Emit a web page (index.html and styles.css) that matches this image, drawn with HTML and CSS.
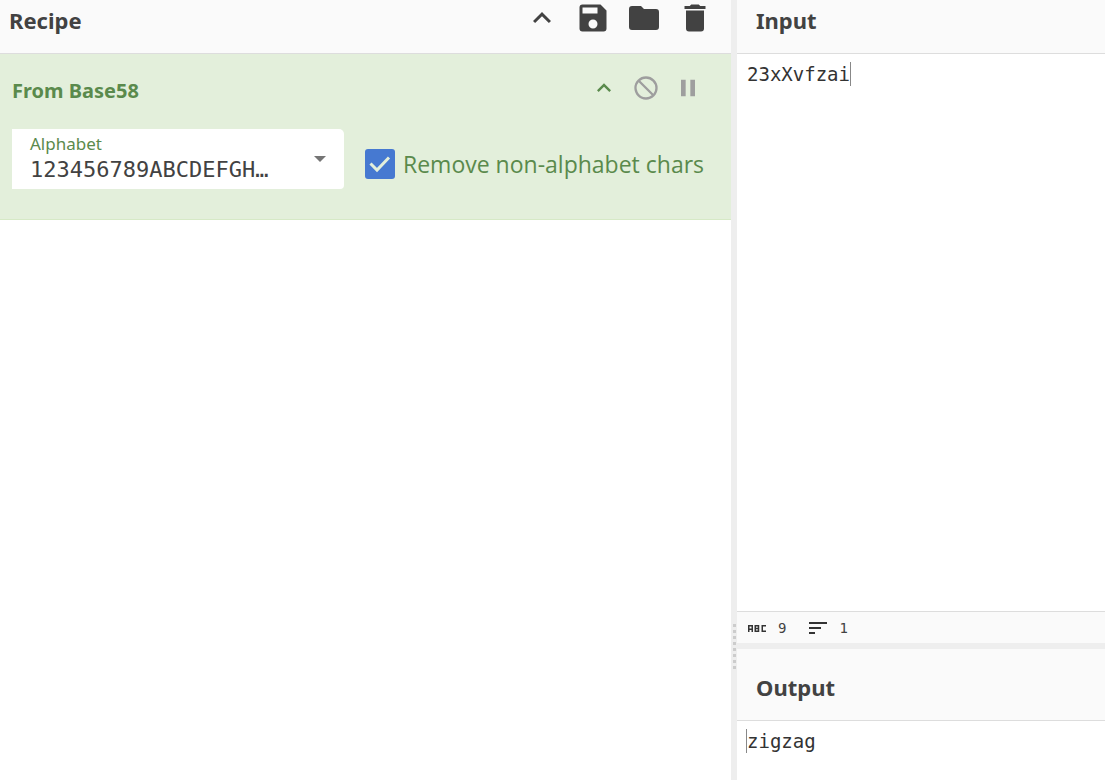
FILE: index.html
```html
<!DOCTYPE html>
<html lang="en">
<head>
<meta charset="utf-8">
<title>Recipe</title>
<link rel="stylesheet" href="styles.css">
</head>
<body>
<main class="workspace">
  <section class="recipe">
    <header class="title recipe-title">
      <h1>Recipe</h1>
      <div class="controls">
        <button type="button" aria-label="Hide arguments"><svg width="36" height="36" viewBox="0 0 24 24"><path d="M12 8l-6 6 1.41 1.41L12 10.83l4.59 4.58L18 14z"/></svg></button>
        <button type="button" aria-label="Save recipe"><svg width="36" height="36" viewBox="0 0 24 24"><path d="M17 3H5a2 2 0 0 0-2 2v14a2 2 0 0 0 2 2h14a2 2 0 0 0 2-2V7l-4-4zm-5 16a3 3 0 1 1 0-6 3 3 0 0 1 0 6zm3-10H5V5h10v4z"/></svg></button>
        <button type="button" aria-label="Load recipe"><svg width="36" height="36" viewBox="0 0 24 24"><path d="M10 4H4a2 2 0 0 0-2 2v12a2 2 0 0 0 2 2h16a2 2 0 0 0 2-2V8a2 2 0 0 0-2-2h-8l-2-2z"/></svg></button>
        <button type="button" aria-label="Clear recipe"><svg width="36" height="36" viewBox="0 0 24 24"><path d="M6 19a2 2 0 0 0 2 2h8a2 2 0 0 0 2-2V7H6v12zM19 4h-3.500l-1-1h-5l-1 1H5v2h14V4z"/></svg></button>
      </div>
    </header>
    <article class="operation">
      <div class="operation-head">
        <h2>From Base58</h2>
        <div class="op-controls">
          <button type="button" class="fold" aria-label="Hide operation arguments"><svg width="28" height="28" viewBox="0 0 24 24"><path d="M12 8l-6 6 1.410 1.410L12 10.830l4.590 4.580L18 14z"/></svg></button>
          <button type="button" aria-label="Disable operation"><svg width="28" height="28" viewBox="0 0 24 24"><path d="M12 2a10 10 0 1 0 0 20 10 10 0 0 0 0-20zM20 12a8 8 0 0 0-8-8c-1.850 0-3.550.630-4.900 1.690L18.310 16.900A7.900 7.900 0 0 0 20 12zm-8 8a7.900 7.900 0 0 0 4.900-1.690L5.690 7.100A8 8 0 0 0 12 20z" fill-rule="evenodd"/></svg></button>
          <button type="button" aria-label="Set breakpoint"><svg width="28" height="28" viewBox="0 0 24 24"><path d="M6 19h4V5H6v14zm8-14v14h4V5h-4z"/></svg></button>
        </div>
      </div>
      <div class="arguments">
        <div class="select-field">
          <div class="select-text">
            <label for="alphabet">Alphabet</label>
            <select id="alphabet"><option>123456789ABCDEFGH…</option></select>
          </div>
          <svg class="arrow" width="12" height="6" viewBox="0 0 12 6"><path d="M0 0h12L6 6z"/></svg>
        </div>
        <label class="check"><input type="checkbox" checked><span class="box"><svg width="30" height="30" viewBox="0 0 30 30"><path d="M5.500 14.500l6.500 6.500L24 8.500"/></svg></span><span>Remove non-alphabet chars</span></label>
      </div>
    </article>
  </section>
  <div class="splitter"><span class="grip"></span></div>
  <div class="io">
    <section class="pane">
      <header class="title"><h1>Input</h1></header>
      <div class="editor">
        <textarea aria-label="Input" spellcheck="false">23xXvfzai</textarea>
        <span class="caret caret-end"></span>
      </div>
      <footer class="status">
        <span class="stat"><svg width="20" height="20" viewBox="0 0 20 20"><path d="M1.750 14V7.750h3.500V14M1.750 11.250h3.500M8.250 7.750h3.250v5.500H8.250zM8.250 10.500h3.250M19 7.750h-3.750v5.500H19"/></svg>9</span>
        <span class="stat lines"><svg width="20" height="20" viewBox="0 0 20 20"><path d="M1 5h18M1 10h12M1 15h6"/></svg>1</span>
      </footer>
    </section>
    <div class="row-splitter"></div>
    <section class="pane">
      <header class="title output-title"><h1>Output</h1></header>
      <div class="editor">
        <textarea aria-label="Output" spellcheck="false" readonly>zigzag</textarea>
        <span class="caret caret-start"></span>
      </div>
    </section>
  </div>
</main>
</body>
</html>
```

FILE: styles.css
```css
* { box-sizing: border-box; }
body {
  margin: 0;
  font-family: "Noto Sans", "Open Sans", sans-serif;
  color: #424242;
  background: #fff;
}
button {
  display: flex;
  padding: 0;
  border: 0;
  background: none;
  color: inherit;
}
svg { display: block; fill: currentColor; }
h1, h2 { margin: 0; line-height: 30px; }
h1 { font-size: 22px; }
h2 { font-size: 20px; }

.workspace {
  display: grid;
  grid-template-columns: 731fr 6px 368fr;
  height: 100vh;
}
.recipe { min-width: 0; }
.title {
  display: flex;
  justify-content: space-between;
  height: 54px;
  padding: 5px 19px 0;
  background: #fafafa;
  border-bottom: 1px solid #ddd;
}
.recipe-title { padding: 0 18px 0 9px; }
.recipe-title h1 { padding-top: 5px; }
.controls { display: flex; gap: 15px; }

.operation {
  height: 166px;
  padding: 20px 29px 30px 12px;
  color: #5a8a4c;
  background: #e3efdb;
  border-bottom: 1px solid #d6e9c6;
}
.operation-head { display: flex; justify-content: space-between; height: 55px; }
.operation-head h2 { padding-top: 2px; }
.op-controls { display: flex; gap: 14px; color: #9e9e9e; }
.fold { color: #5a8a4c; }
.arguments { display: flex; gap: 21px; }
.select-field {
  display: flex;
  flex: none;
  align-items: center;
  width: 332px;
  height: 60px;
  padding: 0 18px;
  background: #fff;
  border-radius: 0 5px 4px 0;
}
.select-text { flex: 1; min-width: 0; }
.select-text label { display: block; font-size: 17px; line-height: 22px; }
select {
  display: block;
  width: 100%;
  height: 30px;
  padding: 0;
  border: 0;
  appearance: none;
  background: none;
  color: #424242;
  font: 22px/30px "DejaVu Sans Mono", monospace;
}
.arrow { color: #757575; }
.check {
  position: relative;
  display: flex;
  align-items: center;
  gap: 8px;
  height: 70px;
  font-family: "Open Sans", sans-serif;
  font-size: 23px;
  line-height: 32px;
  white-space: nowrap;
}
.check input { position: absolute; opacity: 0; }
.box { width: 30px; height: 30px; background: #4679d1; border-radius: 3px; }
.box svg { fill: none; stroke: #e3efdb; stroke-width: 3; }

.splitter { position: relative; background: #eee; }
.grip {
  position: absolute;
  top: 80%;
  right: 1px;
  width: 3px;
  height: 45px;
  background: repeating-linear-gradient(#ccc 0 3px, #eee 3px 6px);
}
.io {
  display: grid;
  grid-template-rows: 643fr 6px 131fr;
  min-width: 0;
}
.pane { display: flex; flex-direction: column; min-height: 0; }
.row-splitter { background: #eee; }
.output-title { height: 72px; padding-top: 23px; flex: none; }
.editor { position: relative; flex: 1; min-height: 0; }
textarea {
  display: block;
  width: 100%;
  height: 100%;
  padding: 8px 10px 0;
  border: 0;
  outline: 0;
  resize: none;
  overflow: hidden;
  background: #fff;
  color: #333;
  font: 19px/24px "DejaVu Sans Mono", monospace;
}
.caret { position: absolute; top: 8px; width: 1px; height: 24px; background: #888; }
.caret-end { left: 113px; }
.caret-start { left: 9px; }
.status {
  display: flex;
  gap: 22px;
  height: 32px;
  padding: 0 10px;
  background: #fafafa;
  border-top: 1px solid #ddd;
  font: 14px/30px "DejaVu Sans Mono", monospace;
}
.stat { display: flex; align-items: center; gap: 11px; }
.stat svg { fill: none; stroke: #333; stroke-width: 1.5; }
.lines svg { stroke-width: 2; }
```
